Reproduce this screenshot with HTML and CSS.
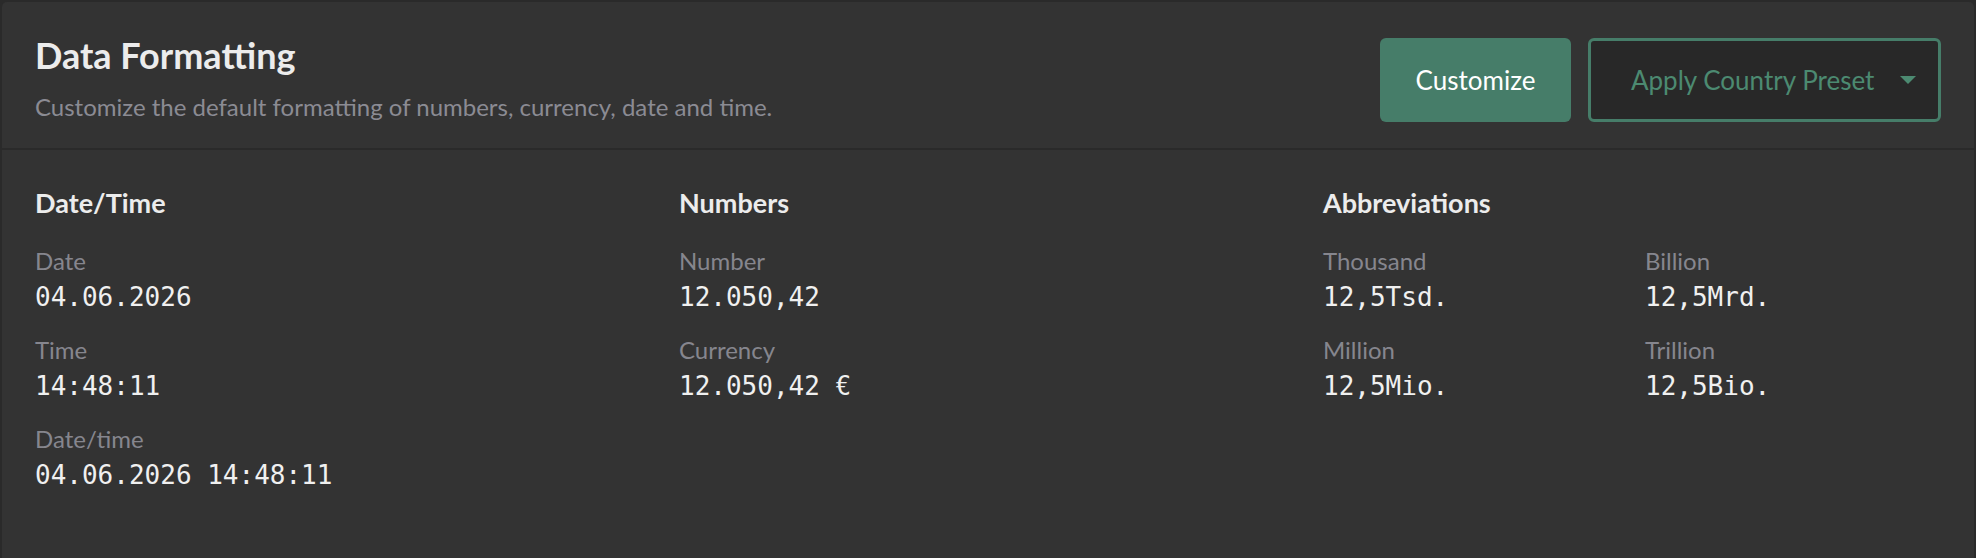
FILE: index.html
```html
<!DOCTYPE html>
<html lang="en">
<head>
  <meta charset="UTF-8" />
  <meta name="viewport" content="width=device-width, initial-scale=1.0"/>
  <title>Data Formatting</title>
  <link rel="stylesheet" href="styles.css">
</head>
<body>
  <div class="card">
    <div class="card-header">
      <div class="intro">
        <h1>Data Formatting</h1>
        <p>Customize the default formatting of numbers, currency, date and time.</p>
      </div>
      <div class="actions">
        <button class="btn btn-primary">Customize</button>
        <button class="btn btn-outline">
          Apply Country Preset
          <span class="caret"></span>
        </button>
      </div>
    </div>

    <div class="card-body">
      <div class="group">
        <h2>Date/Time</h2>
        <div class="field">
          <span class="label">Date</span>
          <span class="value">04.06.2026</span>
        </div>
        <div class="field">
          <span class="label">Time</span>
          <span class="value">14:48:11</span>
        </div>
        <div class="field">
          <span class="label">Date/time</span>
          <span class="value">04.06.2026 14:48:11</span>
        </div>
      </div>

      <div class="group">
        <h2>Numbers</h2>
        <div class="field">
          <span class="label">Number</span>
          <span class="value">12.050,42</span>
        </div>
        <div class="field">
          <span class="label">Currency</span>
          <span class="value">12.050,42 €</span>
        </div>
      </div>

      <div class="group">
        <h2>Abbreviations</h2>
        <div class="abbr-grid">
          <div class="field">
            <span class="label">Thousand</span>
            <span class="value">12,5Tsd.</span>
          </div>
          <div class="field">
            <span class="label">Billion</span>
            <span class="value">12,5Mrd.</span>
          </div>
          <div class="field">
            <span class="label">Million</span>
            <span class="value">12,5Mio.</span>
          </div>
          <div class="field">
            <span class="label">Trillion</span>
            <span class="value">12,5Bio.</span>
          </div>
        </div>
      </div>
    </div>
  </div>
</body>
</html>
```

FILE: styles.css
```css
body {
  margin: 0;
  padding: 2px;
  background: #2a2a2a;
  font-family: Lato, 'Open Sans', sans-serif;
  color: #ececec;
}

.card {
  background: #333333;
  border-radius: 5px;
  min-height: 553px;
  box-sizing: border-box;
}

.card-header {
  display: flex;
  justify-content: space-between;
  align-items: flex-start;
  padding: 33px 33px 26px 33px;
  border-bottom: 2px solid #2a2a2a;
}

h1 {
  margin: 0;
  font-size: 36px;
  line-height: 40px;
  font-weight: 700;
  color: #ececec;
}

.intro p {
  margin: 17px 0 0;
  font-size: 24px;
  line-height: 30px;
  color: #8b8b93;
}

.actions {
  display: flex;
  gap: 17px;
  margin-top: 3px;
}

.btn {
  height: 84px;
  font-family: Lato, sans-serif;
  font-size: 26px;
  border-radius: 6px;
  cursor: pointer;
  box-sizing: border-box;
  display: flex;
  align-items: center;
  white-space: nowrap;
  flex-shrink: 0;
}

.btn-primary {
  background: #467d69;
  color: #ffffff;
  border: none;
  width: 191px;
  justify-content: center;
}

.btn-outline {
  background: #282828;
  color: #4c8a71;
  border: 3px solid #467d69;
  padding: 0 24px 0 40px;
  width: 353px;
  gap: 26px;
}

.caret {
  width: 0;
  height: 0;
  border-left: 8px solid transparent;
  border-right: 8px solid transparent;
  border-top: 8px solid #4c8a71;
}

.card-body {
  display: grid;
  grid-template-columns: repeat(3, 1fr);
  gap: 26px;
  padding: 37px 33px 60px 33px;
}

h2 {
  margin: 0 0 28px;
  font-size: 27px;
  line-height: 32px;
  font-weight: 700;
  color: #ececec;
}

.field {
  display: flex;
  flex-direction: column;
  gap: 6px;
  margin-bottom: 23px;
}

.label {
  font-size: 24px;
  line-height: 28px;
  color: #86868e;
}

.value {
  font-family: 'DejaVu Sans Mono', 'Liberation Mono', monospace;
  font-size: 26px;
  line-height: 32px;
  color: #f0f0f0;
}

.abbr-grid {
  display: grid;
  grid-template-columns: 1fr 1fr;
  column-gap: 26px;
}
```
